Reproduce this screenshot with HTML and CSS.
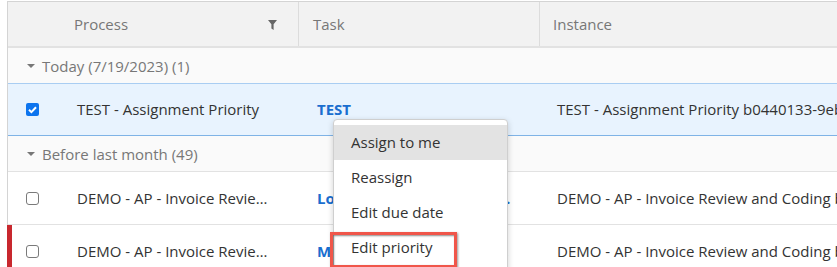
FILE: index.html
```html
<!DOCTYPE html>
<html>
<head>
<meta charset="utf-8">
<link rel="stylesheet" href="styles.css">
</head>
<body>
<div class="grid">
  <div class="hdr">
    <div class="hcell hcheck"></div>
    <div class="hcell hproc">
      <span>Process</span>
      <svg class="filter" width="9" height="10" viewBox="0 0 9 10"><path d="M0 0H9L5.6 4.3V10L3.4 8.6V4.3Z" fill="#666"/></svg>
    </div>
    <div class="hcell htask">Task</div>
    <div class="hcell hinst">Instance</div>
  </div>

  <div class="group"><span class="caret"></span>Today (7/19/2023) (1)</div>

  <div class="row selected">
    <div class="cell ccheck"><span class="cb checked"><svg width="13" height="13" viewBox="0 0 13 13"><path d="M3 6.8L5.4 9.1L10 4.2" stroke="#fff" stroke-width="2" fill="none"/></svg></span></div>
    <div class="cell cproc">TEST - Assignment Priority</div>
    <div class="cell ctask">TEST</div>
    <div class="cell cinst">TEST - Assignment Priority b0440133-9ebf-4a6e-9c3b-1f2d3e4a5b6c</div>
  </div>

  <div class="group"><span class="caret"></span>Before last month (49)</div>

  <div class="row">
    <div class="cell ccheck"><span class="cb"></span></div>
    <div class="cell cproc">DEMO - AP - Invoice Review and Coding</div>
    <div class="cell ctask">Load Invoice Review Task Longer Name Here</div>
    <div class="cell cinst">DEMO - AP - Invoice Review and Coding b0a1c2d3-4e5f-6789</div>
  </div>

  <div class="row urgent">
    <div class="cell ccheck"><span class="cb"></span></div>
    <div class="cell cproc">DEMO - AP - Invoice Review and Coding</div>
    <div class="cell ctask">Manage Invoice Review Task Longer Name Here</div>
    <div class="cell cinst">DEMO - AP - Invoice Review and Coding b0f1e2d3-4c5b-6a79</div>
  </div>

  <div class="menu">
    <div class="mitem active">Assign to me</div>
    <div class="mitem">Reassign</div>
    <div class="mitem">Edit due date</div>
    <div class="mitem">Edit priority</div>
    <div class="mitem">Edit details</div>
  </div>
  <div class="callout"></div>
</div>
</body>
</html>
```

FILE: styles.css
```css
html, body {
  margin: 0;
  padding: 0;
  background: #fff;
  overflow: hidden;
}
body {
  font-family: "Open Sans", "Noto Sans", sans-serif;
  color: #333;
}
.grid {
  position: relative;
  margin: 1px 0 0 7px;
  border-left: 1px solid #d4d4d4;
  border-top: 1px solid #d4d4d4;
  width: 1100px;
}
.hdr {
  display: grid;
  grid-template-columns: 52px 238px 241px 1fr;
  height: 44px;
  background: #f2f2f2;
  border-bottom: 2px solid #e2e2e2;
  font-size: 15px;
  color: #777;
}
.hcell {
  display: flex;
  align-items: center;
}
.hproc {
  padding-left: 14px;
  padding-right: 21px;
  justify-content: space-between;
}
.filter {
  margin-top: 1px;
}
.htask {
  border-left: 1px solid #dcdcdc;
  padding-left: 14px;
}
.hinst {
  border-left: 1px solid #dcdcdc;
  padding-left: 13px;
}
.group {
  display: flex;
  align-items: center;
  height: 35px;
  background: #fafafa;
  border-bottom: 1px solid #e2e2e2;
  font-size: 15px;
  color: #777;
  padding-left: 19px;
}
.caret {
  width: 0;
  height: 0;
  border-left: 4px solid transparent;
  border-right: 4px solid transparent;
  border-top: 4px solid #777;
  margin-right: 7px;
  margin-top: 1px;
}
.row {
  display: grid;
  grid-template-columns: 52px 238px 241px 1fr;
  height: 52px;
  border-bottom: 1px solid #e2e2e2;
  font-size: 15px;
  position: relative;
}
.row.selected {
  background: #e8f3fe;
  border-top: 1px solid #a9cdf2;
  border-bottom: 1px solid #7fb3e6;
  height: 51px;
  margin-top: -1px;
}
.row.urgent::before {
  content: "";
  position: absolute;
  left: -1px;
  top: 0;
  bottom: -1px;
  width: 5px;
  background: #c8282e;
}
.cell {
  display: flex;
  align-items: center;
  min-width: 0;
}
.cell.cproc, .cell.ctask, .cell.cinst {
  display: block;
  line-height: 52px;
  white-space: nowrap;
  overflow: hidden;
  text-overflow: ellipsis;
}
.selected .cell.cproc, .selected .cell.ctask, .selected .cell.cinst {
  line-height: 51px;
}
.ccheck {
  padding-left: 18px;
}
.cproc {
  padding-left: 17px;
  padding-right: 24px;
}
.ctask {
  padding-left: 19px;
  padding-right: 26px;
  color: #1a6ecf;
  font-weight: 700;
}
.cinst {
  padding-left: 18px;
}
.cb {
  display: block;
  width: 11px;
  height: 11px;
  border: 1px solid #7a7a7a;
  border-radius: 3px;
  background: #fff;
}
.cb.checked {
  width: 13px;
  height: 13px;
  border: 0;
  background: #0d74ee;
  border-radius: 2px;
}
.cb svg {
  display: block;
}
.menu {
  position: absolute;
  left: 325px;
  top: 117px;
  width: 173px;
  background: #fff;
  border: 1px solid #cfcfcf;
  border-radius: 4px;
  box-shadow: 0 2px 6px rgba(0, 0, 0, 0.18);
  padding-top: 5px;
  font-size: 15px;
  color: #333;
}
.mitem {
  height: 35px;
  line-height: 35px;
  padding-left: 17px;
}
.mitem.active {
  background: #e3e3e3;
}
.callout {
  position: absolute;
  left: 322px;
  top: 230px;
  width: 121px;
  height: 30px;
  border: 3px solid #f0564a;
  box-shadow: inset 1px 1px 2px rgba(0, 0, 0, 0.45), 1px 1px 2px rgba(0, 0, 0, 0.4);
}
```
